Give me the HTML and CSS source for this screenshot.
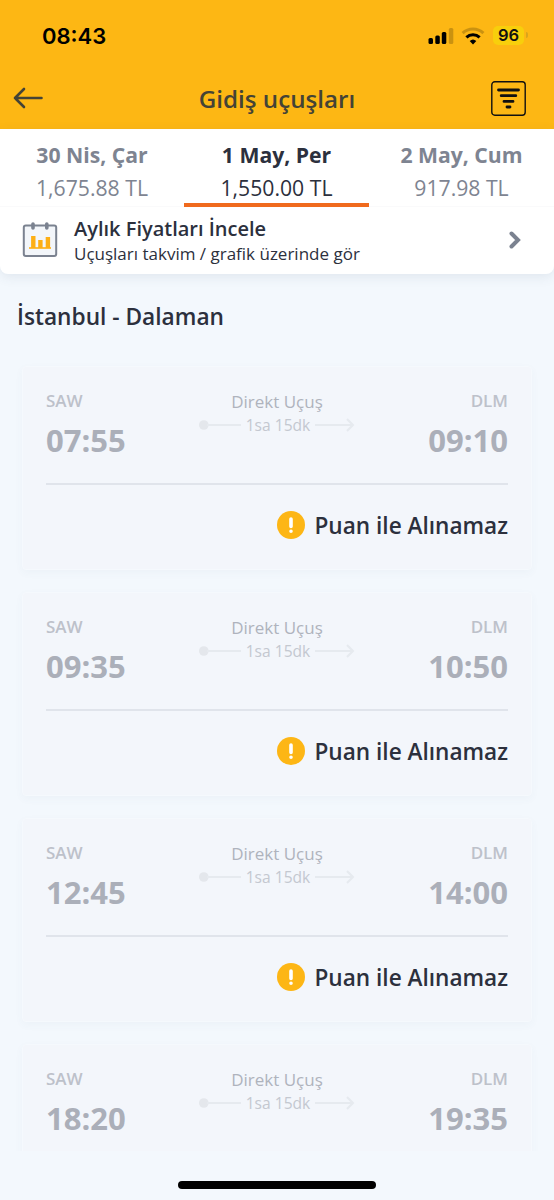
FILE: index.html
```html
<!DOCTYPE html>
<html lang="tr">
<head>
  <meta charset="UTF-8">
  <meta name="viewport" content="width=device-width, initial-scale=1.0">
  <title>Gidiş uçuşları</title>
  <link rel="stylesheet" href="styles.css">
</head>
<body>
    <header class="header">
        <div class="status-bar">
            <span class="clock">08:43</span>
            <div class="status-icons">
                <svg class="signal" width="26" height="18" viewBox="0 0 26 18">
                    <rect x="0.5" y="11" width="4.5" height="6" rx="1.5"/>
                    <rect x="7.3" y="8.5" width="4.5" height="8.5" rx="1.5"/>
                    <rect x="13.8" y="5" width="4.5" height="12" rx="1.5"/>
                    <rect x="20.8" y="1" width="4.5" height="16" rx="1.5" opacity="0.2"/>
                </svg>
                <svg class="wifi" width="24" height="18" viewBox="0 0 24 18" fill="none" stroke="#000" stroke-width="3">
                    <path d="M1.6 6.2a15 15 0 0 1 20.8 0" opacity="0.2"/>
                    <path d="M5.4 10.4a9.5 9.5 0 0 1 13.2 0"/>
                    <path d="M8.7 14.1a4.8 4.8 0 0 1 6.6 0L12 17.4z" fill="#000" stroke="none"/>
                </svg>
                <span class="battery">96</span>
            </div>
        </div>
        <div class="nav-bar">
            <svg class="back" width="30" height="22" viewBox="0 0 30 22">
                <path d="M11 2L2 11l9 9M2 11h26.5"/>
            </svg>
            <h1>Gidiş uçuşları</h1>
            <svg class="filter" width="35" height="35" viewBox="0 0 35 35">
                <rect x="0.8" y="0.8" width="33.4" height="33.4" rx="3" stroke-width="1.4"/>
                <path d="M7.5 9h20M10.2 14.7h14.6M13 20.4h9M16 26h3" stroke-width="2.8"/>
            </svg>
        </div>
    </header>

    <section class="top-panel">
        <nav class="tabs">
            <div class="tab">
                <strong>30 Nis, Çar</strong>
                <span>1,675.88 TL</span>
            </div>
            <div class="tab active">
                <strong>1 May, Per</strong>
                <span>1,550.00 TL</span>
            </div>
            <div class="tab">
                <strong>2 May, Cum</strong>
                <span>917.98 TL</span>
            </div>
        </nav>
        <div class="monthly">
            <svg width="36" height="36" viewBox="0 0 36 36">
                <rect x="1.8" y="3.5" width="32.4" height="30.5" rx="2" fill="#f3f6fa" stroke="#7b8290" stroke-width="2"/>
                <path d="M11 2v4M24.8 2v4" stroke="#7b8290" stroke-width="3.6" stroke-linecap="round"/>
                <path d="M11.3 26V14M18.4 26v-8M25.9 26V15" fill="none" stroke="#fdaf15" stroke-width="4.4"/>
                <path d="M7 26h22" stroke="#fdaf15" stroke-width="1.6"/>
            </svg>
            <div class="monthly-text">
                <h2>Aylık Fiyatları İncele</h2>
                <p>Uçuşları takvim / grafik üzerinde gör</p>
            </div>
            <svg class="chevron" width="12" height="18" viewBox="0 0 12 18">
                <path d="M2.5 2.5L9 9l-6.5 6.5"/>
            </svg>
        </div>
    </section>

    <main class="flights">
        <h2 class="route">İstanbul - Dalaman</h2>

        <article class="card">
            <div class="flight">
                <div class="port">
                    <span>SAW</span>
                    <strong>07:55</strong>
                </div>
                <div class="duration">
                    <p>Direkt Uçuş</p>
                    <div class="line">
                        <svg width="42" height="12" viewBox="0 0 42 12"><circle cx="4.8" cy="6" r="4.8"/><path d="M8 6h34"/></svg>
                        <span>1sa 15dk</span>
                        <svg width="40" height="14" viewBox="0 0 40 14"><path d="M0 7h38M32 1l6 6-6 6"/></svg>
                    </div>
                </div>
                <div class="port right">
                    <span>DLM</span>
                    <strong>09:10</strong>
                </div>
            </div>
            <div class="notice">
                <svg width="28" height="28" viewBox="0 0 28 28"><circle cx="14" cy="14" r="14"/><path d="M14 8v7.4M14 20.2v.1"/></svg>
                <span>Puan ile Alınamaz</span>
            </div>
        </article>

        <article class="card">
            <div class="flight">
                <div class="port">
                    <span>SAW</span>
                    <strong>09:35</strong>
                </div>
                <div class="duration">
                    <p>Direkt Uçuş</p>
                    <div class="line">
                        <svg width="42" height="12" viewBox="0 0 42 12"><circle cx="4.8" cy="6" r="4.8"/><path d="M8 6h34"/></svg>
                        <span>1sa 15dk</span>
                        <svg width="40" height="14" viewBox="0 0 40 14"><path d="M0 7h38M32 1l6 6-6 6"/></svg>
                    </div>
                </div>
                <div class="port right">
                    <span>DLM</span>
                    <strong>10:50</strong>
                </div>
            </div>
            <div class="notice">
                <svg width="28" height="28" viewBox="0 0 28 28"><circle cx="14" cy="14" r="14"/><path d="M14 8v7.4M14 20.2v.1"/></svg>
                <span>Puan ile Alınamaz</span>
            </div>
        </article>

        <article class="card">
            <div class="flight">
                <div class="port">
                    <span>SAW</span>
                    <strong>12:45</strong>
                </div>
                <div class="duration">
                    <p>Direkt Uçuş</p>
                    <div class="line">
                        <svg width="42" height="12" viewBox="0 0 42 12"><circle cx="4.8" cy="6" r="4.8"/><path d="M8 6h34"/></svg>
                        <span>1sa 15dk</span>
                        <svg width="40" height="14" viewBox="0 0 40 14"><path d="M0 7h38M32 1l6 6-6 6"/></svg>
                    </div>
                </div>
                <div class="port right">
                    <span>DLM</span>
                    <strong>14:00</strong>
                </div>
            </div>
            <div class="notice">
                <svg width="28" height="28" viewBox="0 0 28 28"><circle cx="14" cy="14" r="14"/><path d="M14 8v7.4M14 20.2v.1"/></svg>
                <span>Puan ile Alınamaz</span>
            </div>
        </article>

        <article class="card">
            <div class="flight">
                <div class="port">
                    <span>SAW</span>
                    <strong>18:20</strong>
                </div>
                <div class="duration">
                    <p>Direkt Uçuş</p>
                    <div class="line">
                        <svg width="42" height="12" viewBox="0 0 42 12"><circle cx="4.8" cy="6" r="4.8"/><path d="M8 6h34"/></svg>
                        <span>1sa 15dk</span>
                        <svg width="40" height="14" viewBox="0 0 40 14"><path d="M0 7h38M32 1l6 6-6 6"/></svg>
                    </div>
                </div>
                <div class="port right">
                    <span>DLM</span>
                    <strong>19:35</strong>
                </div>
            </div>
        </article>
    </main>

    <footer class="home-area">
        <div class="home-indicator"></div>
    </footer>
</body>
</html>
```
FILE: styles.css
```css
* {
  box-sizing: border-box;
}
body {
  display: flex;
  flex-direction: column;
  height: 1200px;
  margin: 0;
  overflow: hidden;
  font-family: 'Open Sans', sans-serif;
  background: #f3f8fd;
  color: #2c303d;
}
h1, h2, p {
  margin: 0;
}
svg {
  display: block;
  flex: none;
}
.header {
  flex: none;
  height: 129px;
  background: #fdb714;
}
.status-bar {
  display: flex;
  justify-content: space-between;
  align-items: center;
  height: 71px;
  padding: 0 30px 0 42px;
}
.clock {
  font-family: Inter, sans-serif;
  font-size: 22px;
  font-weight: 600;
  color: #000;
}
.status-icons {
  display: flex;
  align-items: center;
  gap: 7px;
}
.battery {
  position: relative;
  width: 31px;
  height: 19px;
  margin-left: 1px;
  border-radius: 5px;
  background: #f8cf0c;
  color: #111;
  font-family: Inter, sans-serif;
  font-size: 16.5px;
  font-weight: 600;
  line-height: 19px;
  text-align: center;
}
.battery::after {
  content: '';
  position: absolute;
  top: 6px;
  right: -4px;
  width: 2px;
  height: 6px;
  border-radius: 0 2px 2px 0;
  background: #d9a51c;
}
.nav-bar {
  display: grid;
  grid-template-columns: 64px 1fr 64px;
  align-items: center;
  height: 54px;
}
.nav-bar h1 {
  font-size: 24.2px;
  font-weight: 600;
  line-height: 33px;
  color: #444336;
  text-align: center;
}
.back {
  margin-left: 13px;
  fill: none;
  stroke: #444336;
  stroke-width: 2.6;
  stroke-linecap: round;
  stroke-linejoin: round;
}
.filter {
  margin-left: 1px;
  fill: none;
  stroke: #111;
  stroke-linecap: round;
}
.top-panel {
  flex: none;
  height: 145px;
  background: #fff;
  border-radius: 0 0 8px 8px;
  box-shadow: 0 3px 12px rgba(60, 80, 110, 0.1);
}
.tabs {
  display: grid;
  grid-template-columns: 184px 185px 185px;
  height: 77px;
}
.tab {
  padding-top: 10px;
  border-bottom: 1px solid #fafafb;
  color: #7e8491;
  text-align: center;
}
.tab strong, .tab span {
  display: block;
  height: 32px;
  line-height: 32px;
}
.tab strong {
  font-size: 21.2px;
}
.tab span {
  font-size: 21.2px;
  line-height: 33px;
}
.tab.active {
  border-bottom: 4px solid #f06a1d;
  color: #2c303d;
}
.monthly {
  display: flex;
  align-items: center;
  height: 68px;
  padding: 1px 33px 2px 22px;
}
.monthly-text {
  flex: 1;
  padding: 3px 0 0 16px;
}
.monthly h2 {
  font-size: 20px;
  font-weight: 600;
  line-height: 26px;
}
.monthly p {
  font-size: 17px;
  line-height: 24px;
}
.chevron {
  fill: none;
  stroke: #7b8290;
  stroke-width: 4;
  stroke-linecap: round;
}
.flights {
  flex: 1;
  padding: 26px 22px 0;
  overflow: hidden;
}
.route {
  height: 66px;
  margin-left: -5px;
  font-size: 22.7px;
  font-weight: 600;
  line-height: 34px;
}
.card {
  height: 204px;
  margin-bottom: 22px;
  padding: 20px 23px 0;
  background: #f3f6fb;
  border: 1px solid #f5f9fd;
  border-radius: 4px;
  box-shadow: 0 3px 9px rgba(80, 100, 140, 0.04);
}
.flight {
  display: flex;
  justify-content: space-between;
  height: 98px;
  border-bottom: 2px solid #e0e4eb;
}
.port span, .port strong {
  display: block;
}
.port span {
  height: 27px;
  font-size: 17px;
  font-weight: 600;
  line-height: 27px;
  color: #bdc1ca;
}
.port strong {
  font-size: 31px;
  line-height: 52px;
  color: #abafb9;
}
.right {
  text-align: right;
}
.duration {
  padding-top: 2px;
  text-align: center;
}
.duration p {
  font-size: 17px;
  line-height: 25px;
  color: #afb3bd;
}
.line {
  display: flex;
  align-items: center;
  justify-content: space-between;
  width: 156px;
  font-size: 15.6px;
  line-height: 22px;
  color: #c4c8d0;
}
.line svg {
  fill: none;
  stroke: #e6eaef;
  stroke-width: 2;
}
.line circle {
  fill: #e4e7ec;
  stroke: none;
}
.notice {
  display: flex;
  justify-content: flex-end;
  align-items: center;
  gap: 9px;
  height: 80px;
  font-size: 22.6px;
  font-weight: 600;
  line-height: 30px;
}
.notice span {
  margin-top: 1px;
}
.notice circle {
  fill: #fdb615;
}
.notice path {
  stroke: #fff;
  stroke-width: 3.6;
  stroke-linecap: round;
}
.home-area {
  flex: none;
  height: 49px;
  padding-top: 30px;
}
.home-indicator {
  width: 198px;
  height: 8px;
  margin: 0 auto;
  border-radius: 4px;
  background: #000;
}
```
